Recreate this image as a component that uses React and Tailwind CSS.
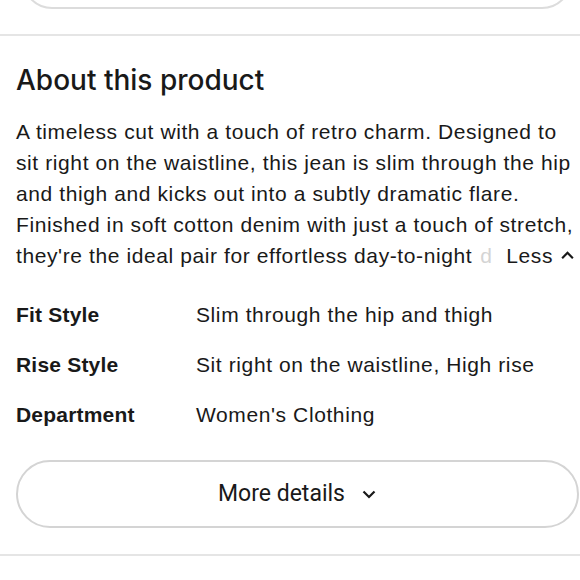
import React from "react";

const body = { fontFamily: '"Liberation Sans", Arial, sans-serif' };
const head = { fontFamily: 'Inter, "Noto Sans", sans-serif' };

export default function App() {
  return (
    <div className="w-[580px] h-[580px] bg-white overflow-hidden text-[#191919]">
      <div className="h-[9px] overflow-hidden px-[22px] pr-[8px]">
        <div className="h-[60px] -mt-[51px] rounded-[30px] border-2 border-[#dcdcdc]"></div>
      </div>
      <div className="h-[25px]"></div>
      <div className="h-[2px] bg-[#e5e5e5]"></div>
      <div className="pl-[16px]">
        <h2 className="text-[28px] leading-[34px] font-medium mt-[27px]" style={head}>
          About this product
        </h2>
        <div className="mt-[19px] text-[21px] leading-[31px] tracking-[0.6px] whitespace-nowrap" style={body}>
          <p>A timeless cut with a touch of retro charm. Designed to</p>
          <p>sit right on the waistline, this jean is slim through the hip</p>
          <p>and thigh and kicks out into a subtly dramatic flare.</p>
          <p>Finished in soft cotton denim with just a touch of stretch,</p>
          <p className="flex items-center pr-[5px]">
            <span>they're the ideal pair for effortless day-to-night</span>
            <span className="text-[#d4d4d4] ml-[8px]">d</span>
            <span className="ml-auto">Less</span>
            <svg width="15" height="15" viewBox="0 0 14 14" className="ml-[7px]">
              <path d="M2 9.5 L7 4.5 L12 9.5" fill="none" stroke="#191919" strokeWidth="2" />
            </svg>
          </p>
        </div>
        <div className="mt-[19px] text-[21px] tracking-[0.6px]" style={body}>
          {[
            ["Fit Style", "Slim through the hip and thigh"],
            ["Rise Style", "Sit right on the waistline, High rise"],
            ["Department", "Women's Clothing"],
          ].map(([k, v]) => (
            <div key={k} className="flex h-[50px] items-center">
              <div className="w-[180px] font-semibold tracking-[0.2px]">{k}</div>
              <div>{v}</div>
            </div>
          ))}
        </div>
        <div className="mt-[20px] h-[68px] rounded-[34px] border-2 border-[#d4d4d4] flex items-center justify-center mr-[1px]">
          <span className="text-[23px]" style={{ fontFamily: 'Roboto, "Noto Sans", sans-serif' }}>More details</span>
          <svg width="16" height="16" viewBox="0 0 16 16" className="ml-[16px]">
            <path d="M2.5 5.5 L8 11 L13.5 5.5" fill="none" stroke="#191919" strokeWidth="2.2" />
          </svg>
        </div>
      </div>
      <div className="mt-[26px] h-[2px] bg-[#e5e5e5]"></div>
    </div>
  );
}
